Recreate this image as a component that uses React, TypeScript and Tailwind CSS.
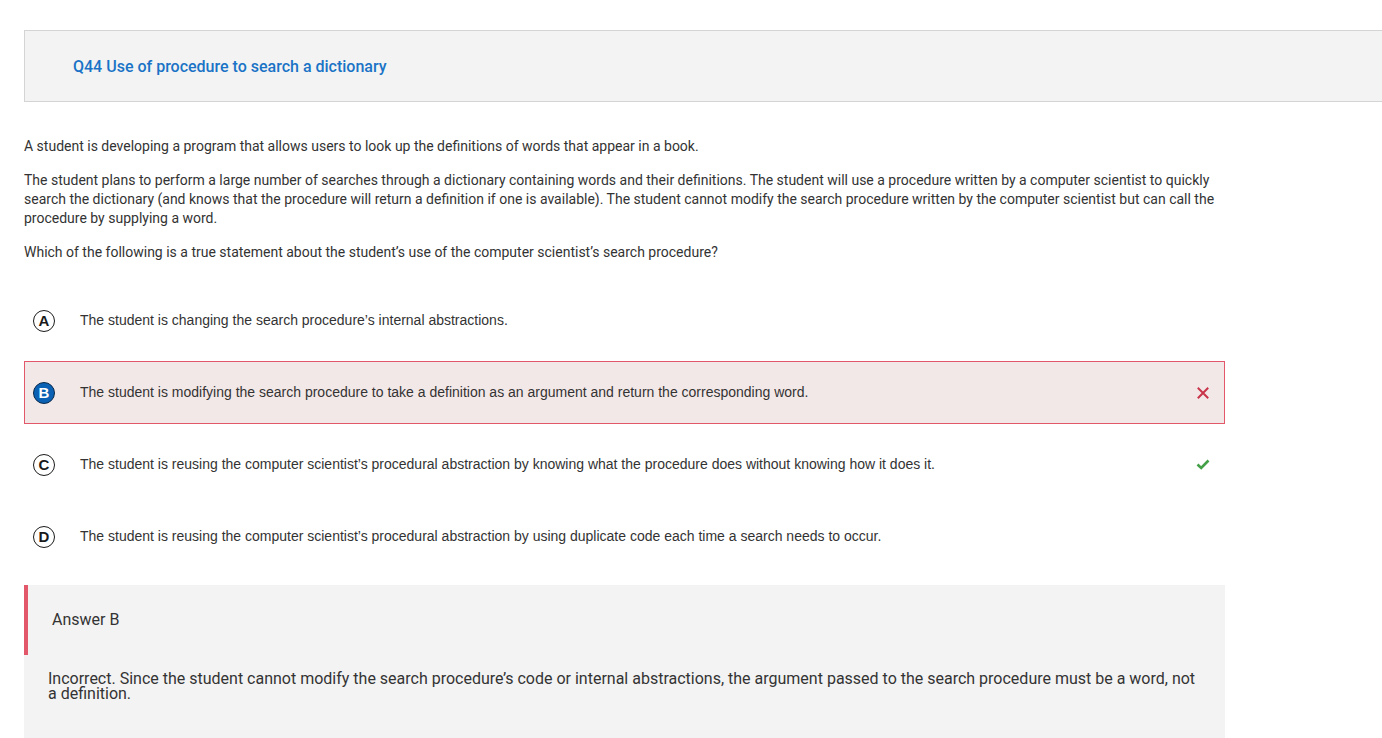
import React from "react";

function Letter({ l, selected }: { l: string; selected?: boolean }) {
  if (selected) {
    return (
      <div className="flex h-[22px] w-[22px] shrink-0 items-center justify-center rounded-full border-[1.5px] border-[#0a2a4a] bg-[#0b62b5] text-[15px] font-bold leading-none text-white [font-family:Arial,'Liberation_Sans',sans-serif]">
        {l}
      </div>
    );
  }
  return (
    <div className="flex h-[22px] w-[22px] shrink-0 items-center justify-center rounded-full border-[1.5px] border-[#1a1a1a] bg-white text-[15px] font-bold leading-none text-[#1a1a1a] [font-family:Arial,'Liberation_Sans',sans-serif]">
      {l}
    </div>
  );
}

function XIcon() {
  return (
    <svg width="12" height="12" viewBox="0 0 12 12">
      <path d="M1.5 1.5 L10.5 10.5 M10.5 1.5 L1.5 10.5" stroke="#c8354a" strokeWidth="2" strokeLinecap="square" />
    </svg>
  );
}

function CheckIcon() {
  return (
    <svg width="14" height="11" viewBox="0 0 14 11">
      <path d="M1.5 5.5 L5.2 9 L12.5 1.5" stroke="#43a047" strokeWidth="2.6" fill="none" />
    </svg>
  );
}

const options = [
  { l: "A", t: "The student is changing the search procedure\u2019s internal abstractions." },
  {
    l: "B",
    t: "The student is modifying the search procedure to take a definition as an argument and return the corresponding word.",
    selected: true,
  },
  {
    l: "C",
    t: "The student is reusing the computer scientist\u2019s procedural abstraction by knowing what the procedure does without knowing how it does it.",
    correct: true,
  },
  {
    l: "D",
    t: "The student is reusing the computer scientist\u2019s procedural abstraction by using duplicate code each time a search needs to occur.",
  },
];

export default function App() {
  return (
    <div className="min-h-[738px] w-full overflow-hidden bg-white pl-[24px] pt-[30px] [font-family:Roboto,'Liberation_Sans',sans-serif]">
      <div className="flex h-[72px] w-[1370px] items-center border border-[#d4d4d4] bg-[#f3f3f3] pl-[48px] pt-[2px]">
        <span className="text-[16px] font-medium text-[#1a73c6]">Q44 Use of procedure to search a dictionary</span>
      </div>

      <div className="w-[1201px]">
        <div className="mt-[35px] flex flex-col gap-[15px] text-[14px] leading-[19px] text-[#333333]">
          <p>A student is developing a program that allows users to look up the definitions of words that appear in a book.</p>
          <p>
            The student plans to perform a large number of searches through a dictionary containing words and their
            definitions. The student will use a procedure written by a computer scientist to quickly search the dictionary
            (and knows that the procedure will return a definition if one is available). The student cannot modify the
            search procedure written by the computer scientist but can call the procedure by supplying a word.
          </p>
          <p>Which of the following is a true statement about the student&rsquo;s use of the computer scientist&rsquo;s search procedure?</p>
        </div>

        <div className="mt-[27px] flex flex-col gap-[9px]">
          {options.map((o) => (
            <div
              key={o.l}
              className={
                o.selected
                  ? "flex h-[63px] items-center border border-[#e2576a] bg-[#f3e8e8] pl-[8px] pr-[14px]"
                  : "flex h-[63px] items-center border border-transparent pl-[8px] pr-[14px]"
              }
            >
              <Letter l={o.l} selected={o.selected} />
              <span className="ml-[25px] flex-1 text-[14px] text-[#333333] [font-family:Arial,'Liberation_Sans',sans-serif]">
                {o.t}
              </span>
              <div className="flex w-[14px] items-center justify-center">
                {o.selected ? <XIcon /> : o.correct ? <CheckIcon /> : null}
              </div>
            </div>
          ))}
        </div>

        <div className="mt-[17px] bg-[#f3f3f3] pb-[60px]">
          <div className="flex h-[70px] items-center border-l-4 border-[#e2576a] pl-[24px] text-[16px] text-[#333333]">
            Answer B
          </div>
          <p className="mt-[16px] px-[24px] text-[16px] leading-[15px] text-[#333333]">
            Incorrect. Since the student cannot modify the search procedure&rsquo;s code or internal abstractions, the
            argument passed to the search procedure must be a word, not a definition.
          </p>
        </div>
      </div>
    </div>
  );
}
